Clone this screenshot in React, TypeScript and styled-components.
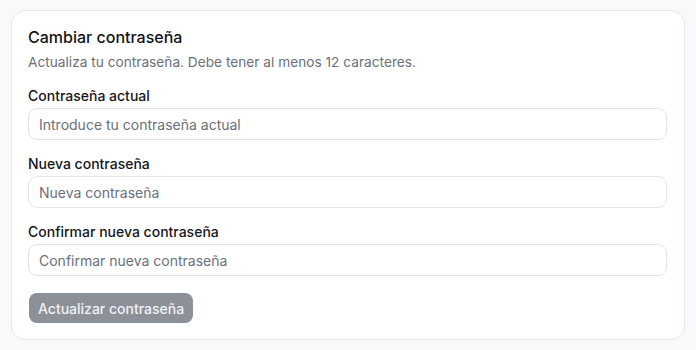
import styled, { createGlobalStyle } from 'styled-components';

const GlobalStyle = createGlobalStyle`
  html, body {
    margin: 0;
    padding: 0;
    background: #f8f9fb;
  }
  body {
    font-family: Inter, "Liberation Sans", sans-serif;
    color: #111827;
  }
  * { box-sizing: border-box; }
`;

const Page = styled.div`
  padding: 10px 11px;
`;

const Card = styled.form`
  background: #ffffff;
  border: 1px solid #e5e7eb;
  border-radius: 14px;
  padding: 16px 17px 16px 16px;
  display: flex;
  flex-direction: column;
`;

const Title = styled.h2`
  margin: 0;
  font-size: 16px;
  line-height: 20px;
  font-weight: 450;
  color: #111318;
`;

const Description = styled.p`
  margin: 5px 0 14px;
  font-size: 13.7px;
  line-height: 20px;
  color: #6b7078;
`;

const Fields = styled.div`
  display: flex;
  flex-direction: column;
  gap: 14px;
`;

const Field = styled.div`
  display: flex;
  flex-direction: column;
  gap: 2px;
`;

const Label = styled.label`
  font-size: 14px;
  line-height: 20px;
  font-weight: 450;
  color: #15171c;
`;

const Input = styled.input`
  height: 32px;
  width: 100%;
  border: 1px solid #e3e5e8;
  border-radius: 9px;
  padding: 0 10px;
  font-family: inherit;
  font-size: 14px;
  color: #111827;
  background: #fff;
  outline: none;
  &::placeholder {
    color: #6b7078;
  }
`;

const Submit = styled.button`
  align-self: flex-start;
  margin-top: 17px;
  margin-left: 1px;
  height: 30px;
  padding: 0 9px;
  border: none;
  border-radius: 8px;
  background: #8b9099;
  color: #f1f2f4;
  font-family: inherit;
  font-size: 14px;
  font-weight: 450;
  cursor: not-allowed;
`;

const fields = [
  { id: 'current', label: 'Contraseña actual', placeholder: 'Introduce tu contraseña actual' },
  { id: 'new', label: 'Nueva contraseña', placeholder: 'Nueva contraseña' },
  { id: 'confirm', label: 'Confirmar nueva contraseña', placeholder: 'Confirmar nueva contraseña' },
];

export default function App() {
  return (
    <>
      <GlobalStyle />
      <Page>
        <Card onSubmit={e => e.preventDefault()}>
          <Title>Cambiar contraseña</Title>
          <Description>Actualiza tu contraseña. Debe tener al menos 12 caracteres.</Description>
          <Fields>
            {fields.map(f => (
              <Field key={f.id}>
                <Label htmlFor={f.id}>{f.label}</Label>
                <Input id={f.id} type="password" placeholder={f.placeholder} />
              </Field>
            ))}
          </Fields>
          <Submit type="submit" disabled>
            Actualizar contraseña
          </Submit>
        </Card>
      </Page>
    </>
  );
}
